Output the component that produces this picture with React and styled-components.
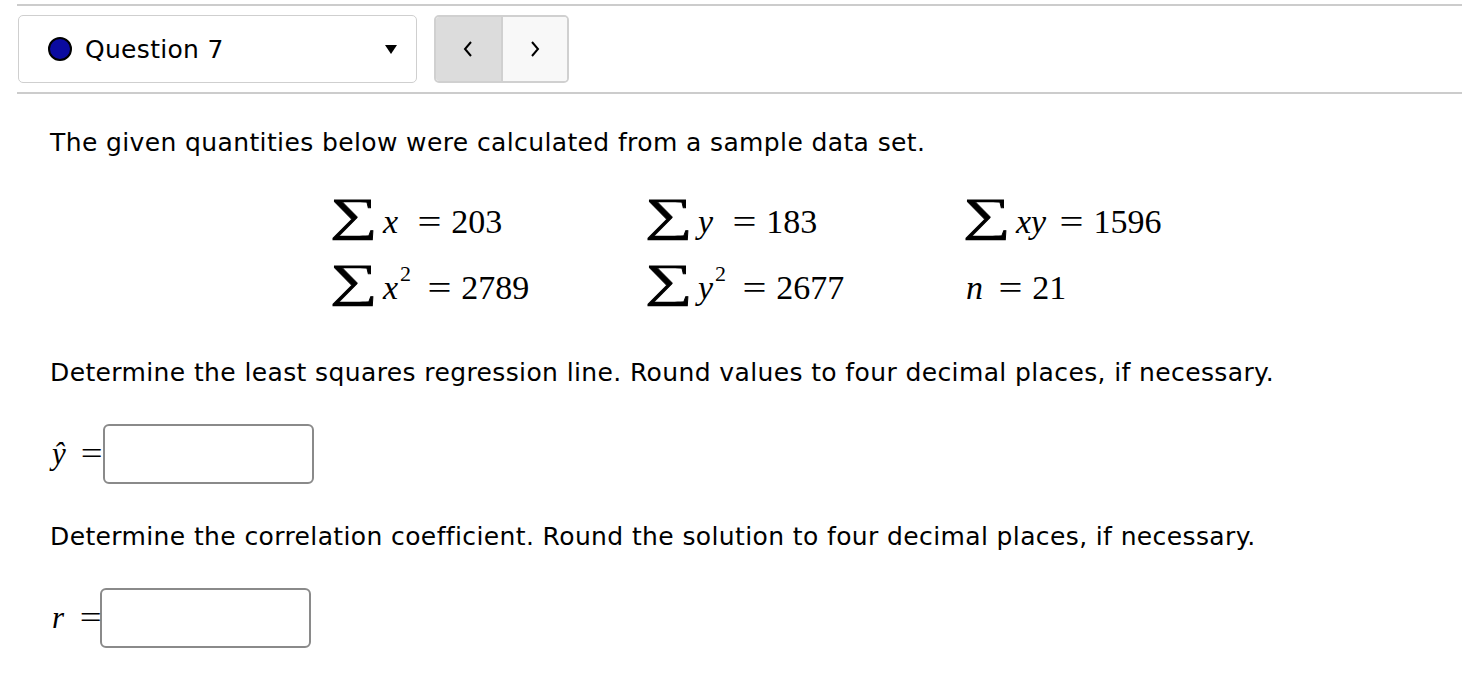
import React from "react";
import styled, { createGlobalStyle } from "styled-components";

const GlobalStyle = createGlobalStyle`
  html, body {
    margin: 0;
    padding: 0;
    background: #fff;
  }
  body {
    font-family: "DejaVu Sans", Verdana, sans-serif;
    color: #000;
  }
`;

const Page = styled.div`
  width: 1462px;
  height: 676px;
  overflow: hidden;
  box-sizing: border-box;
  padding: 4px 0 0 17px;
`;

const Header = styled.div`
  display: flex;
  align-items: center;
  gap: 17px;
  padding: 9px 0 9px 1px;
  border-top: 2px solid #cccccc;
  border-bottom: 2px solid #cccccc;
`;

const Dropdown = styled.div`
  display: flex;
  align-items: center;
  box-sizing: border-box;
  width: 399px;
  height: 68px;
  padding: 0 19px 0 29px;
  border: 1.5px solid #cfcfcf;
  border-radius: 5px;
  background: #fff;
`;

const StatusDot = styled.span`
  width: 24px;
  height: 24px;
  box-sizing: border-box;
  border-radius: 50%;
  border: 2px solid #000;
  background: #0b0ba0;
  flex: none;
`;

const QuestionLabel = styled.span`
  margin-left: 13px;
  font-size: 25px;
  letter-spacing: 0.3px;
  flex: 1;
`;

const Nav = styled.div`
  display: flex;
  box-sizing: border-box;
  width: 135px;
  height: 68px;
  border: 2px solid #d0d0d0;
  border-radius: 5px;
  overflow: hidden;
`;

const NavButton = styled.div`
  flex: 1;
  display: flex;
  align-items: center;
  justify-content: center;
  background: ${(p) => (p.$active ? "#dcdcdc" : "#f8f8f8")};
  border-right: ${(p) => (p.$active ? "2px solid #d0d0d0" : "none")};
`;

const Content = styled.div`
  padding-left: 33px;
`;

const Prompt = styled.p`
  margin: ${(p) => p.$top}px 0 0;
  font-size: 25px;
  letter-spacing: 0.38px;
  line-height: 30px;
  white-space: nowrap;
`;

const SumGrid = styled.div`
  display: grid;
  grid-template-columns: 315px 318px 300px;
  grid-auto-rows: 66px;
  margin: 31px 0 0 280px;
  font-family: "Liberation Serif", "DejaVu Serif", serif;
  font-size: 34px;
`;

const Cell = styled.div`
  display: flex;
  align-items: center;
  white-space: nowrap;
  padding-left: ${(p) => p.$indent || 0}px;
`;

const Sigma = styled.span`
  display: inline-block;
  width: 36px;
  margin-right: 17px;
  font-size: 46px;
  line-height: 1;
  transform: scaleX(1.45);
  transform-origin: left center;
  -webkit-text-stroke: 0.7px #000;
  position: relative;
  top: -7px;
`;

const Var = styled.i`
  font-style: italic;
`;

const Sup = styled.span`
  font-size: 22px;
  align-self: flex-start;
  margin: 6px 0 0 2px;
`;

const Eq = styled.span`
  display: inline-block;
  transform: scaleX(1.25);
  margin: 0 ${(p) => p.$after ?? 12}px 0 ${(p) => p.$gap ?? 22}px;
`;

const AnswerRow = styled.div`
  display: flex;
  align-items: center;
  margin-top: 36px;
  height: 60px;
`;

const AnswerLabel = styled.span`
  display: flex;
  align-items: center;
  padding-left: 2px;
  width: ${(p) => p.$w}px;
  font-family: "Liberation Serif", "DejaVu Serif", serif;
  font-size: 31px;
`;

const AnswerInput = styled.input`
  box-sizing: border-box;
  width: 211px;
  height: 60px;
  border: 2px solid #8a8a8a;
  border-radius: 6px;
  background: #fff;
  outline: none;
`;

const Chevron = ({ dir }) => (
  <svg width="12" height="18" viewBox="0 0 12 18">
    <polyline
      points={dir === "left" ? "9,2 3,9 9,16" : "3,2 9,9 3,16"}
      fill="none"
      stroke="#000"
      strokeWidth="2"
    />
  </svg>
);

const Caret = () => (
  <svg width="12" height="10" viewBox="0 0 12 10">
    <polygon points="0,1 12,1 6,10" fill="#000" />
  </svg>
);

export default function App() {
  return (
    <>
      <GlobalStyle />
      <Page>
        <Header>
          <Dropdown>
            <StatusDot />
            <QuestionLabel>Question 7</QuestionLabel>
            <Caret />
          </Dropdown>
          <Nav>
            <NavButton $active>
              <Chevron dir="left" />
            </NavButton>
            <NavButton>
              <Chevron dir="right" />
            </NavButton>
          </Nav>
        </Header>
        <Content>
          <Prompt $top={34}>
            The given quantities below were calculated from a sample data set.
          </Prompt>
          <SumGrid>
            <Cell>
              <Sigma>∑</Sigma>
              <Var>x</Var>
              <Eq>=</Eq>203
            </Cell>
            <Cell>
              <Sigma>∑</Sigma>
              <Var>y</Var>
              <Eq>=</Eq>183
            </Cell>
            <Cell>
              <Sigma>∑</Sigma>
              <Var>xy</Var>
              <Eq $gap={16}>=</Eq>1596
            </Cell>
            <Cell>
              <Sigma>∑</Sigma>
              <Var>x</Var>
              <Sup>2</Sup>
              <Eq $gap={19}>=</Eq>2789
            </Cell>
            <Cell>
              <Sigma>∑</Sigma>
              <Var>y</Var>
              <Sup>2</Sup>
              <Eq $gap={19}>=</Eq>2677
            </Cell>
            <Cell $indent={3}>
              <Var>n</Var>
              <Eq $gap={18}>=</Eq>21
            </Cell>
          </SumGrid>
          <Prompt $top={37}>
            Determine the least squares regression line. Round values to four
            decimal places, if necessary.
          </Prompt>
          <AnswerRow>
            <AnswerLabel $w={51}>
              <Var>ŷ</Var>
              <Eq $gap={17} $after={0}>=</Eq>
            </AnswerLabel>
            <AnswerInput />
          </AnswerRow>
          <Prompt $top={38}>
            Determine the correlation coefficient. Round the solution to four
            decimal places, if necessary.
          </Prompt>
          <AnswerRow>
            <AnswerLabel $w={48}>
              <Var>r</Var>
              <Eq $gap={18} $after={0}>=</Eq>
            </AnswerLabel>
            <AnswerInput />
          </AnswerRow>
        </Content>
      </Page>
    </>
  );
}
